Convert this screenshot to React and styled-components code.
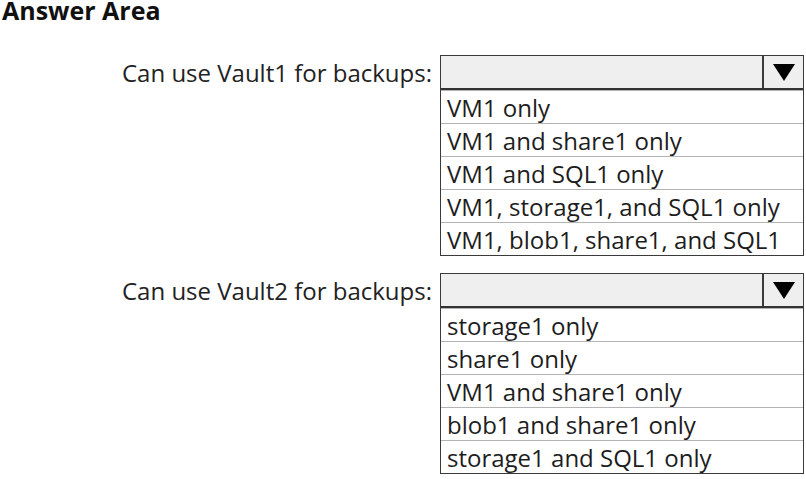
import React from "react";
import styled, { createGlobalStyle } from "styled-components";

const Global = createGlobalStyle`
  html, body { margin: 0; padding: 0; background: #ffffff; }
  body { font-family: "Open Sans", "Lato", sans-serif; color: #1d1d1d; }
`;

const Page = styled.div`
  width: 806px;
  height: 479px;
  box-sizing: border-box;
  padding: 0 0 0 2px;
  display: flex;
  flex-direction: column;
  overflow: hidden;
`;

const Title = styled.h1`
  margin: 0;
  height: 20px;
  font-size: 25px;
  font-weight: 700;
  line-height: 20px;
  color: #111;
`;

const Questions = styled.div`
  display: flex;
  flex-direction: column;
  gap: 17px;
  margin-top: 35px;
`;

const Question = styled.div`
  display: grid;
  grid-template-columns: 430px 364px;
  column-gap: 8px;
  align-items: start;
`;

const Label = styled.div`
  height: 34px;
  display: flex;
  align-items: center;
  justify-content: flex-end;
  font-size: 24px;
  color: #222;
`;

const Box = styled.div`
  border: 1px solid #3a3a3a;
  display: flex;
  flex-direction: column;
`;

const Header = styled.div`
  height: 32px;
  display: flex;
  background: #efefef;
  border-bottom: 2px solid #333;
`;

const Field = styled.div`
  flex: 1;
`;

const ArrowCell = styled.div`
  width: 39px;
  border-left: 2px solid #3a3a3a;
  display: flex;
  align-items: center;
  justify-content: center;
`;

const Option = styled.div`
  height: 33px;
  box-sizing: border-box;
  padding-left: 6px;
  display: flex;
  align-items: center;
  font-size: 24px;
  color: #1d1d1d;
  border-top: 1px solid #b4b4b4;
  &:first-child { border-top: none; height: 35px; }
`;

const Arrow = () => (
  <svg width="22" height="17" viewBox="0 0 22 17">
    <polygon points="0,0 22,0 11,17" fill="#000" />
  </svg>
);

const questions = [
  {
    label: "Can use Vault1 for backups:",
    options: [
      "VM1 only",
      "VM1 and share1 only",
      "VM1 and SQL1 only",
      "VM1, storage1, and SQL1 only",
      "VM1, blob1, share1, and SQL1",
    ],
  },
  {
    label: "Can use Vault2 for backups:",
    options: [
      "storage1 only",
      "share1 only",
      "VM1 and share1 only",
      "blob1 and share1 only",
      "storage1 and SQL1 only",
    ],
  },
];

export default function App() {
  return (
    <Page>
      <Global />
      <Title>Answer Area</Title>
      <Questions>
        {questions.map((q) => (
          <Question key={q.label}>
            <Label>{q.label}</Label>
            <Box>
              <Header>
                <Field />
                <ArrowCell>
                  <Arrow />
                </ArrowCell>
              </Header>
              {q.options.map((o) => (
                <Option key={o}>{o}</Option>
              ))}
            </Box>
          </Question>
        ))}
      </Questions>
    </Page>
  );
}
